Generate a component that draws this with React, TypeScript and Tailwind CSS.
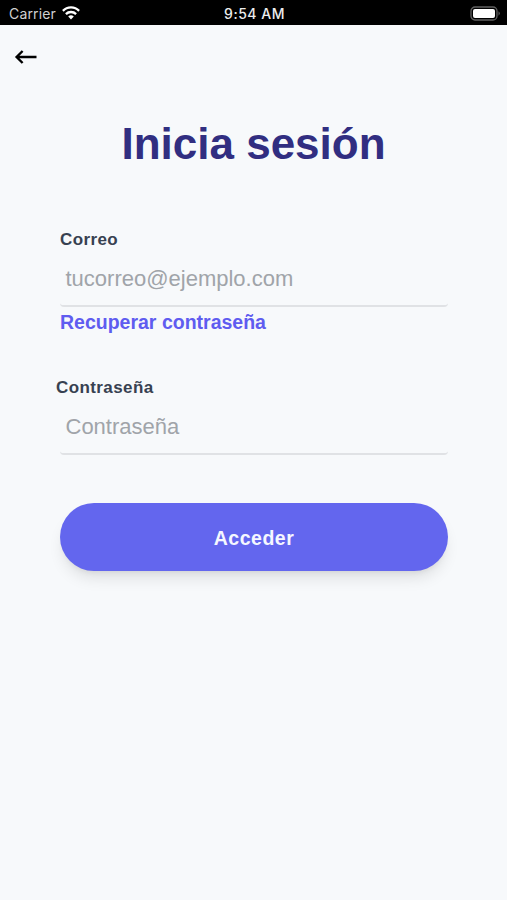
export default function App() {
  return (
    <main className="flex h-[900px] w-[507px] flex-col overflow-hidden bg-[#f7f9fb] font-['Liberation_Sans',Arial,sans-serif]">
      <header className="grid h-[25px] shrink-0 grid-cols-3 items-center bg-black pt-px pr-[6px] pl-[9px] font-['Inter','Liberation_Sans',sans-serif] text-[14px] text-white">
        <div className="flex items-center gap-1.5 text-[#d0d0d0]">
          <span className="tracking-[0.15px]">Carrier</span>
          <svg width="18" height="14" viewBox="0 0 18 14" fill="none" stroke="white" strokeWidth="2.3">
            <path d="M.9 4.9C5.3 .3 12.7 .3 17.1 4.9M3.9 8.1C6.7 5.3 11.3 5.3 14.1 8.1" />
            <path d="M6.2 10.5Q9 8.2 11.8 10.5L9 13.4Z" fill="white" stroke="none" />
          </svg>
        </div>
        <span className="-ml-px text-center text-[14px] font-medium tracking-[0.5px] whitespace-nowrap text-[#ededed]">9:54 AM</span>
        <svg className="justify-self-end" width="31" height="15" viewBox="0 0 31 15">
          <rect x="1" y="1" width="26" height="13" rx="4" fill="none" stroke="#606060" strokeWidth="1.3" />
          <rect x="3" y="3" width="22" height="9" rx="2" fill="white" />
          <path d="M28.5 5.3q2.6 2.2 0 4.4z" fill="#606060" />
        </svg>
      </header>
      <button aria-label="Volver" className="mt-[24px] ml-[14px] h-4 w-6">
        <svg width="24" height="16" viewBox="0 0 24 16" fill="none" stroke="black" strokeWidth="2.4">
          <path d="M22.5 8H2.5M8.6 2L2.6 8L8.6 14" />
        </svg>
      </button>
      <h1 className="mt-[53px] text-center text-[44px] leading-[52px] font-bold text-[#312e81]">Inicia sesión</h1>
      <form className="mt-[60px] flex flex-col pr-[59px] pl-[60px]">
        <label className="text-[17px] leading-5 font-bold tracking-[0.4px] text-[#374151]">Correo</label>
        <div className="flex h-[57px] items-center rounded-[4px] border-b-2 border-[#e0e2e5] pt-px pl-[5.5px] text-[22px] text-[#a0a4a9]">tucorreo@ejemplo.com</div>
        <a className="mt-[3px] text-[19.5px] leading-6 font-bold text-[#5f5cf0]">Recuperar contraseña</a>
        <label className="mt-[44px] -ml-[4px] text-[17px] leading-5 font-bold tracking-[0.4px] text-[#374151]">Contraseña</label>
        <div className="flex h-[57px] items-center rounded-[4px] border-b-2 border-[#e0e2e5] pt-px pl-[5.5px] text-[22px] text-[#a0a4a9]">Contraseña</div>
        <button type="button" className="mt-[48px] h-[68px] rounded-full bg-[#6366ee] pt-[3px] text-[19.5px] font-bold tracking-[0.5px] text-[#f5f7ff] shadow-lg">Acceder</button>
      </form>
    </main>
  );
}
